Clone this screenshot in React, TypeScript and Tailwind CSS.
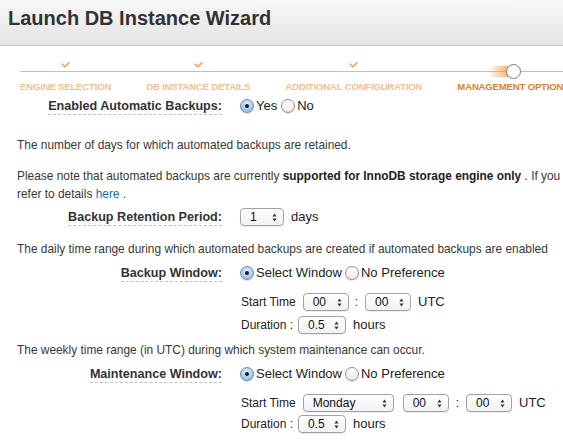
import React from "react";

const ORANGE_LINE = "bg-[#ebb486]";

function Check() {
  return (
    <svg width="9" height="6" viewBox="0 0 9 6" className="block">
      <path d="M1.2 2.2 L3.8 4.7 L7.8 1" fill="none" stroke="#efb37f" strokeWidth="2" strokeLinecap="round" strokeLinejoin="round" />
    </svg>
  );
}

type StepState = "done" | "active";

function Step({ label, state }: { label: string; state: StepState }) {
  return (
    <div className="flex flex-col items-center shrink-0">
      <div className="relative h-[16px] w-full flex justify-center">
        {state === "done" ? (
          <div className="-mt-[1px]">
            <Check />
          </div>
        ) : (
          <>
            {/* grey remainder of the progress track */}
            <div className="absolute left-1/2 top-[8px] h-[1px] w-[300px] bg-[#bdbdbd]" />
            {/* motion glow trailing the current-step marker */}
            <div className="absolute top-[3px] right-1/2 mr-[5px] h-[11px] w-[20px] rounded-l-full bg-[linear-gradient(to_right,rgba(248,175,100,0),rgba(246,160,80,0.55)_60%,rgba(244,150,70,0.8))] [mask-image:repeating-linear-gradient(to_bottom,#000_0px,#000_1px,rgba(0,0,0,0.7)_1px,rgba(0,0,0,0.7)_2px)]" />
            <div className="relative mt-[1px] h-[15px] w-[15px] rounded-full border-[1.5px] border-[#7a7a7a] bg-white" />
          </>
        )}
      </div>
      <div
        className={
          "mt-[2px] h-[12px] leading-[12px] whitespace-nowrap text-[9.6px] font-bold tracking-[-0.2px] " +
          (state === "done" ? "text-[#f5c08f]" : "text-[#e5801f]")
        }
      >
        {label}
      </div>
    </div>
  );
}

function Radio({ checked, label }: { checked: boolean; label: string }) {
  return (
    <div className="flex items-center">
      {checked ? (
        <div className="h-[14px] w-[14px] rounded-full border border-[#6f8db3] bg-[radial-gradient(circle_at_50%_35%,#e6f1fd_0%,#aacbf1_55%,#7eaee6_100%)] flex items-center justify-center shadow-[0_1px_1px_rgba(0,0,0,0.15)]">
          <div className="h-[4px] w-[4px] rounded-full bg-[#1b1b1b]" />
        </div>
      ) : (
        <div className="h-[14px] w-[14px] rounded-full border border-[#8e8e8e] bg-[linear-gradient(to_bottom,#ffffff,#e9e9e9)] shadow-[0_1px_1px_rgba(0,0,0,0.1)]" />
      )}
      <span className="ml-[2px] text-[13px] text-[#222]">{label}</span>
    </div>
  );
}

function Arrows() {
  return (
    <svg width="5" height="9" viewBox="0 0 5 9" className="block">
      <path d="M2.5 0.5 L4.6 3.4 L0.4 3.4 Z" fill="#3a3a3a" />
      <path d="M2.5 8.5 L4.6 5.6 L0.4 5.6 Z" fill="#3a3a3a" />
    </svg>
  );
}

function Select({ value, w }: { value: string; w: string }) {
  return (
    <div
      className={
        w +
        " h-[18px] flex items-center justify-between pl-[9px] pr-[6px] rounded-[4px] border border-[#a2a2a2] bg-[linear-gradient(to_bottom,#ffffff,#f1f1f1)] shadow-[0_1px_1px_rgba(0,0,0,0.08)] text-[12px] text-[#111]"
      }
    >
      <span>{value}</span>
      <Arrows />
    </div>
  );
}

function Label({ children }: { children: React.ReactNode }) {
  return (
    <div className="w-[205px] shrink-0 flex justify-end">
      <span className="text-[12.6px] font-bold text-[#333] leading-[16px] border-b border-dashed border-[#c2c2c2]">
        {children}
      </span>
    </div>
  );
}

function FieldRow({ label, children, className }: { label: string; children: React.ReactNode; className: string }) {
  return (
    <div className={"flex items-center h-[20px] " + className}>
      <Label>{label}</Label>
      <div className="ml-[18px] flex items-center">{children}</div>
    </div>
  );
}

function SubRow({ children, className }: { children: React.ReactNode; className: string }) {
  return (
    <div className={"flex items-center h-[20px] pl-[224px] text-[12px] text-[#222] " + className}>{children}</div>
  );
}

export default function App() {
  return (
    <div
      className="w-[563px] h-[441px] overflow-hidden bg-white text-[#333]"
      style={{ fontFamily: '"Liberation Sans", Arial, Helvetica, sans-serif' }}
    >
      {/* title bar */}
      <div className="h-[46px] border-b border-[#c9c9c9] bg-[linear-gradient(to_bottom,#f8f8f8,#e3e3e3)] pl-[8px] pt-[6px]">
        <h1 className="text-[20px] leading-[24px] font-bold text-[#333] whitespace-nowrap">Launch DB Instance Wizard</h1>
      </div>

      {/* wizard progress */}
      <div className="relative mt-[17px] pl-[20px] flex gap-[35px] whitespace-nowrap">
        <div className={"absolute left-[20px] right-0 top-[8px] h-[1px] " + ORANGE_LINE} />
        <Step label="ENGINE SELECTION" state="done" />
        <Step label="DB INSTANCE DETAILS" state="done" />
        <Step label="ADDITIONAL CONFIGURATION" state="done" />
        <Step label="MANAGEMENT OPTIONS" state="active" />
      </div>

      {/* form */}
      <div className="pl-[17px] text-[11.9px] text-[#383838] whitespace-nowrap">
        <FieldRow label="Enabled Automatic Backups:" className="mt-[3px]">
          <Radio checked label="Yes" />
          <div className="ml-[4px]">
            <Radio checked={false} label="No" />
          </div>
        </FieldRow>

        <p className="mt-[20px] leading-[18px]">The number of days for which automated backups are retained.</p>

        <div className="mt-[13px] leading-[18px]">
          <p>
            Please note that automated backups are currently{" "}
            <b className="text-[#222]">supported for InnoDB storage engine only</b> . If you are using MyISAM, please
          </p>
          <p>
            refer to details <a className="text-[#1e6cb8]">here</a> .
          </p>
        </div>

        <FieldRow label="Backup Retention Period:" className="mt-[4px]">
          <Select value="1" w="w-[44px]" />
          <span className="ml-[7px] text-[13px] text-[#222]">days</span>
        </FieldRow>

        <p className="mt-[13px] leading-[18px]">
          The daily time range during which automated backups are created if automated backups are enabled
        </p>

        <FieldRow label="Backup Window:" className="mt-[5px]">
          <Radio checked label="Select Window" />
          <div className="ml-[3px]">
            <Radio checked={false} label="No Preference" />
          </div>
        </FieldRow>

        <SubRow className="mt-[9px]">
          <span>Start Time</span>
          <div className="ml-[7px]">
            <Select value="00" w="w-[46px]" />
          </div>
          <span className="ml-[6px] mr-[7px]">:</span>
          <Select value="00" w="w-[46px]" />
          <span className="ml-[7px] text-[13px]">UTC</span>
        </SubRow>

        <SubRow className="mt-[3px]">
          <span>Duration :</span>
          <div className="ml-[5px]">
            <Select value="0.5" w="w-[48px]" />
          </div>
          <span className="ml-[7px] text-[13px]">hours</span>
        </SubRow>

        <p className="mt-[6px] leading-[18px]">
          The weekly time range (in UTC) during which system maintenance can occur.
        </p>

        <FieldRow label="Maintenance Window:" className="mt-[5px]">
          <Radio checked label="Select Window" />
          <div className="ml-[3px]">
            <Radio checked={false} label="No Preference" />
          </div>
        </FieldRow>

        <SubRow className="mt-[9px]">
          <span>Start Time</span>
          <div className="ml-[7px]">
            <Select value="Monday" w="w-[91px]" />
          </div>
          <div className="ml-[9px]">
            <Select value="00" w="w-[46px]" />
          </div>
          <span className="ml-[7px] mr-[7px]">:</span>
          <Select value="00" w="w-[46px]" />
          <span className="ml-[7px] text-[13px]">UTC</span>
        </SubRow>

        <SubRow className="mt-[1px]">
          <span>Duration :</span>
          <div className="ml-[5px]">
            <Select value="0.5" w="w-[48px]" />
          </div>
          <span className="ml-[7px] text-[13px]">hours</span>
        </SubRow>
      </div>
    </div>
  );
}
